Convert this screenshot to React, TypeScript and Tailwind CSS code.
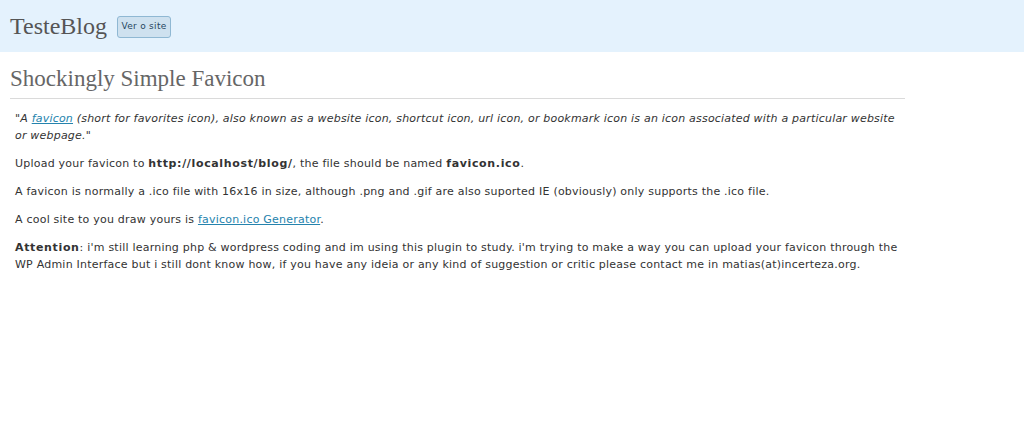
export default function App() {
  return (
    <div className="min-h-[448px] bg-white" style={{ fontFamily: '"DejaVu Sans", Verdana, sans-serif' }}>
      <div className="h-[52px] bg-[#e4f2fd] flex items-center pl-[10px]">
        <span className="text-[24px] text-[#555] leading-none" style={{ fontFamily: '"Liberation Serif", Georgia, serif' }}>TesteBlog</span>
        <span className="ml-[10px] mt-[2px] h-[22px] w-[54px] justify-center flex items-center rounded-[3px] border border-[#8fb8d3] bg-[#cee1ef] text-[9px] tracking-[0.3px] text-[#264761]">Ver o site</span>
      </div>
      <div className="w-[895px] ml-[10px]">
        <h2 className="mt-[13px] pb-[6px] text-[23px] text-[#666] leading-[27px] border-b border-[#dadada]" style={{ fontFamily: '"Liberation Serif", Georgia, serif' }}>Shockingly Simple Favicon</h2>
        <div className="pl-[5px] text-[11px] leading-[17px] tracking-[0.22px] text-[#333]">
          <p className="mt-[11px] italic tracking-[0.2px]">"A <a className="text-[#2583ad] underline">favicon</a> (short for favorites icon), also known as a website icon, shortcut icon, url icon, or bookmark icon is an icon associated with a particular website or webpage."</p>
          <p className="mt-[11px]">Upload your favicon to <b className="tracking-[0.65px]">http://localhost/blog/</b>, the file should be named <b className="tracking-[0.65px]">favicon.ico</b>.</p>
          <p className="mt-[11px]">A favicon is normally a .ico file with 16x16 in size, although .png and .gif are also suported IE (obviously) only supports the .ico file.</p>
          <p className="mt-[11px]">A cool site to you draw yours is <a className="text-[#2583ad] underline">favicon.ico Generator</a>.</p>
          <p className="mt-[11px]"><b className="tracking-[0.65px]">Attention</b>: i'm still learning php &amp; wordpress coding and im using this plugin to study. i'm trying to make a way you can upload your favicon through the WP Admin Interface but i still dont know how, if you have any ideia or any kind of suggestion or critic please contact me in matias(at)incerteza.org.</p>
        </div>
      </div>
    </div>
  );
}
